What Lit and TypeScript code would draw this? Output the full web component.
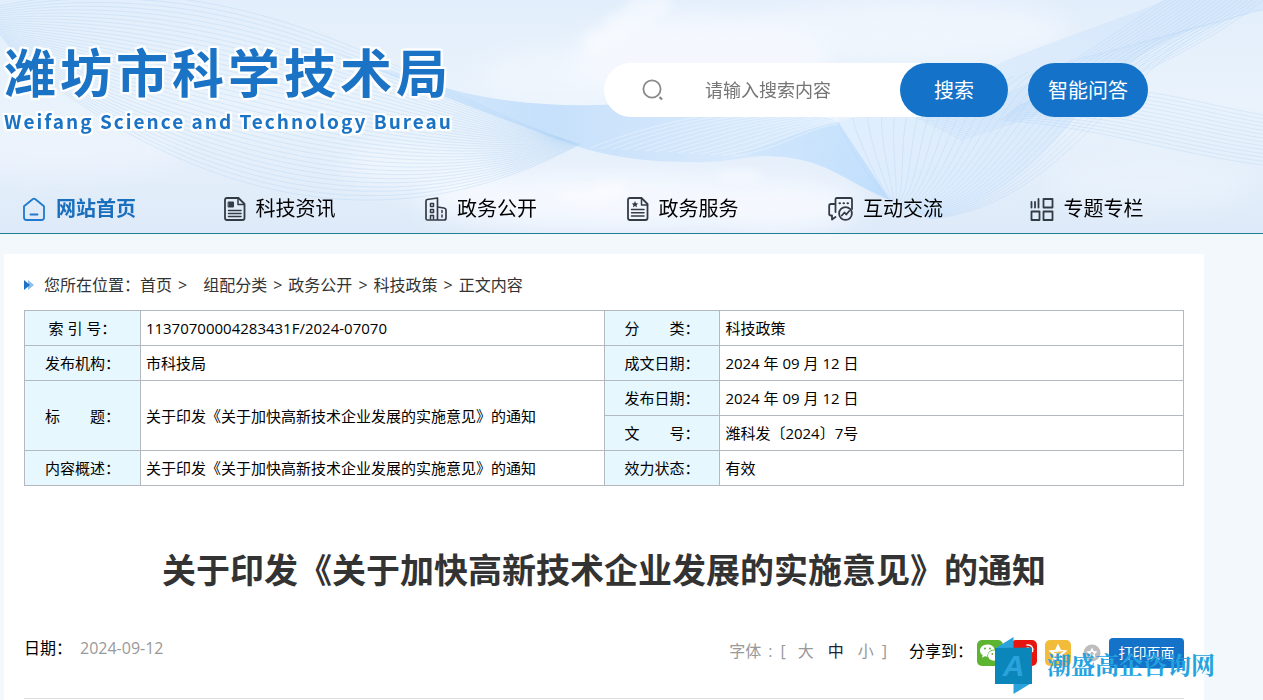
import { LitElement, html, svg, css } from "lit";
import { customElement, state } from "lit/decorators.js";

/** A family of evenly blended cubic curves between two outer curves. */
function ribbon(from: number[], to: number[], count: number): string {
  let d = "";
  for (let i = 0; i < count; i++) {
    const t = i / (count - 1);
    const p = from.map((v, k) => Math.round((v + (to[k] - v) * t) * 10) / 10);
    d += `M${p[0]} ${p[1]}C${p[2]} ${p[3]} ${p[4]} ${p[5]} ${p[6]} ${p[7]}`;
  }
  return d;
}

@customElement("sky-backdrop")
class SkyBackdrop extends LitElement {
  static styles = css`
    :host { display: block; overflow: hidden; }
    .art { display: block; width: 100%; height: 100%; }
  `;
  render() {
    const line = "#b3d4f5";
    return html`<svg class="art" viewBox="0 0 1263 233" preserveAspectRatio="none" aria-hidden="true">
      <defs>
        <linearGradient id="sky" x1="0" y1="0" x2="0" y2="1">
          <stop offset="0" stop-color="#e2eefb" /><stop offset="0.45" stop-color="#eaf3fc" /><stop offset="1" stop-color="#deeaf9" />
        </linearGradient>
        <linearGradient id="band" x1="300" y1="0" x2="900" y2="0" gradientUnits="userSpaceOnUse">
          <stop offset="0" stop-color="#cfe5fb" stop-opacity="0.5" /><stop offset="0.4" stop-color="#c6e0fb" /><stop offset="0.7" stop-color="#d6e8fb" /><stop offset="1" stop-color="#d3e8fd" stop-opacity="0.6" />
        </linearGradient>
        <linearGradient id="fold" x1="733" y1="150" x2="880" y2="190" gradientUnits="userSpaceOnUse">
          <stop offset="0" stop-color="#cbe3fc" stop-opacity="0.5" /><stop offset="1" stop-color="#c0defc" />
        </linearGradient>
        <linearGradient id="sweep" x1="840" y1="200" x2="1200" y2="0" gradientUnits="userSpaceOnUse">
          <stop offset="0" stop-color="#deedfd" /><stop offset="1" stop-color="#d2e5fa" />
        </linearGradient>
        <filter id="soft" x="-30%" y="-30%" width="160%" height="160%"><feGaussianBlur stdDeviation="12" /></filter>
        <filter id="puff" x="-30%" y="-30%" width="160%" height="160%"><feGaussianBlur stdDeviation="5" /></filter>
      </defs>
      <rect width="1263" height="233" fill="url(#sky)" />
      <g fill="#f4f8fe" filter="url(#soft)">
        <ellipse cx="700" cy="60" rx="130" ry="46" />
        <ellipse cx="900" cy="30" rx="170" ry="30" opacity="0.7" />
        <ellipse cx="560" cy="75" rx="80" ry="26" opacity="0.6" />
        <ellipse cx="60" cy="150" rx="120" ry="24" opacity="0.5" />
        <ellipse cx="420" cy="165" rx="80" ry="24" opacity="0.7" />
        <ellipse cx="610" cy="200" rx="190" ry="30" />
        <ellipse cx="770" cy="205" rx="90" ry="28" />
        <ellipse cx="1150" cy="185" rx="100" ry="26" opacity="0.35" />
      </g>
      <g fill="#fafcff" opacity="0.55" filter="url(#puff)">
        <circle cx="640" cy="14" r="17" /><circle cx="618" cy="28" r="15" /><circle cx="596" cy="42" r="13" /><circle cx="660" cy="5" r="12" />
        <ellipse cx="590" cy="196" rx="34" ry="9" /><ellipse cx="612" cy="188" rx="16" ry="8" /><ellipse cx="740" cy="176" rx="24" ry="7" />
      </g>
      <path d="M838 122C850 118 910 105 960 80C1050 40 1120 20 1165 0H1263V10C1190 20 1120 60 1080 110C1040 165 990 205 930 219C905 212 895 206 890 200Z" fill="url(#sweep)" opacity="0.75" />
      <path d="M300 35C350 60 400 75 446 88C500 103 560 108 620 104C720 98 820 110 838 122L890 200C850 184 830 162 785 157C750 153 730 164 690 162C650 162 610 158 570 144C480 110 380 75 300 35Z" fill="url(#band)" />
      <path d="M733 154C765 150 800 128 838 122L890 200C850 184 830 162 785 157Z" fill="url(#fold)" />
      <g fill="none" stroke=${line} stroke-width="0.7">
        <path opacity="0.55" d=${ribbon([-20, 10, 240, -50, 400, 80, 560, 138], [20, 60, 240, 235, 430, 225, 580, 144], 36)} />
        <path opacity="0.5" d=${ribbon([838, 122, 850, 150, 870, 180, 890, 200], [1263, 10, 1130, 30, 1080, 205, 930, 219], 30)} />
        <path opacity="0.5" d=${ribbon([900, 110, 1010, 120, 1100, 40, 1165, 0], [960, 140, 1060, 110, 1190, 60, 1263, 0], 20)} />
        <path opacity="0.5" d=${ribbon([1020, 105, 1100, 70, 1180, 100, 1263, 115], [1000, 120, 1090, 125, 1180, 155, 1263, 165], 14)} />
      </g>
      <g fill="none" stroke="#fff" stroke-width="0.7" opacity="0.5">
        <path d=${ribbon([590, 148, 660, 120, 740, 105, 838, 104], [733, 156, 780, 150, 800, 130, 838, 124], 14)} />
      </g>
    </svg>`;
  }
}

const navIcons = {
  home: { w: 24, art: svg`<path d="M2 9.2L10.6 2.2Q12 1.1 13.4 2.2L22 9.2V20.5Q22 23 19.500 23H4.500Q2 23 2 20.500Z" stroke-width="1.800"/><path d="M8.500 17.500H15.500" stroke-width="1.800"/>` },
  news: { w: 22, art: svg`<path d="M1 3Q1 1 3 1H14.500L20.500 7V21Q20.500 23 18.500 23H3Q1 23 1 21Z" stroke-width="1.800"/><path d="M14 1.500V7.500H20" stroke-width="1.500"/><path d="M4.500 5H9.500V10H4.500Z" fill="currentColor" stroke-width="1"/><path d="M4.500 13.500H17M4.500 16.500H17M4.500 19.500H17" stroke-width="1.500"/>` },
  building: { w: 22, art: svg`<path d="M1 4Q1 2.800 2.200 2.500L12.500 1V23H2.500Q1 23 1 21.500ZM12.500 10L19 11Q21 11.500 21 13V21Q21 23 19 23H12.500" stroke-width="1.700"/><path d="M5.500 6.500H8.500V9.500H5.500ZM5.500 12.500H8.500V15.500H5.500ZM5.500 22V18.500H8.500V22M17 13.500V15.500M17 18V20" stroke-width="1.500"/>` },
  service: { w: 22, art: svg`<path d="M1 3Q1 1 3 1H14.500L20.500 7V21Q20.500 23 18.500 23H3Q1 23 1 21Z" stroke-width="1.800"/><path d="M14.500 1.500V8H20.500" stroke-width="1.500"/><path d="M8 4L9 6.200L11.200 6.400L9.600 8L10 10.200L8 9L6 10.200L6.400 8L4.800 6.400L7 6.200Z" fill="currentColor" stroke="none"/><path d="M4.500 12.500H17M4.500 15.800H17M4.500 19H17" stroke-width="1.500"/>` },
  chat: { w: 25, art: svg`<path d="M7.500 15V2.500Q7.500 1 9 1H22.500Q24 1 24 2.500V12" stroke-width="1.800"/><path d="M7 7H3Q1.200 7 1.200 8.800V17Q1.200 18.500 3 18.500H4V22.500L7.500 20" stroke-width="1.800"/><path d="M11.500 6.200H12M15.500 6.200H16M19.500 6.200H20" stroke-width="2"/><circle cx="17.500" cy="16.500" r="6.400" stroke-width="1.800"/><path d="M13.800 18.500L16.500 15.500L18.300 17.500L21.200 14" stroke-width="1.800"/>` },
  grid: { w: 24, art: svg`<path d="M1.500 5V10.500M5 5V10.500M8.500 2V10.500" stroke-width="1.800"/><path d="M13.500 2H22.500V10.500H13.500ZM1.500 14.500H9.500V23H1.500ZM13.500 14.500H22.500V23H13.500Z" stroke-width="1.800"/>` },
};

const nav: { label: string; icon: keyof typeof navIcons; active?: boolean }[] = [
  { label: "网站首页", icon: "home", active: true },
  { label: "科技资讯", icon: "news" },
  { label: "政务公开", icon: "building" },
  { label: "政务服务", icon: "service" },
  { label: "互动交流", icon: "chat" },
  { label: "专题专栏", icon: "grid" },
];

@customElement("site-header")
class SiteHeader extends LitElement {
  static styles = css`
    :host { display: block; position: relative; border-bottom: 1px solid #1c7f94; background: #e6f0fb; }
    .backdrop { position: absolute; inset: 0; }
    .top {
      position: relative; display: flex; align-items: center; justify-content: space-between;
      max-width: 1144px; padding: 43px 0 0 4px;
    }
    .logo {
      color: #1a73c5; text-decoration: none; font-weight: 700; white-space: nowrap;
      font-family: "Noto Sans CJK SC", sans-serif;
      text-shadow: 2px 0 1px #fff, -2px 0 1px #fff, 0 2px 1px #fff, 0 -2px 1px #fff, 2px 2px 1px #fff, -2px -2px 1px #fff, 2px -2px 1px #fff, -2px 2px 1px #fff;
    }
    .name { display: block; font-size: 52px; line-height: 56px; letter-spacing: 4px; }
    .latin { display: block; margin-top: 6px; font-size: 19px; line-height: 32px; letter-spacing: 2px; }
    .tools { display: flex; gap: 20px; }
    .search { display: flex; align-items: center; width: 404px; height: 54px; border-radius: 27px; background: #fff; }
    .glass { flex: none; width: 22px; height: 22px; margin: 0 41px 0 38px; }
    .field {
      flex: 1; min-width: 0; height: 54px; padding: 0; border: 0; outline: 0; background: none;
      font: inherit; font-size: 18px; color: #333;
    }
    .field::placeholder { color: #757575; opacity: 1; }
    .btn {
      flex: none; height: 54px; padding: 0 0 2px; border: 0; border-radius: 27px; background: #1473c8; color: #fff;
      font: inherit; font-size: 20px; cursor: pointer;
    }
    .go { width: 108px; }
    .ask { width: 120px; }
    .nav {
      position: relative; display: grid; grid-template-columns: repeat(6, 1fr);
      height: 48px; margin-top: 48px; padding: 0 32px 0 22px;
    }
    .item { display: flex; align-items: center; gap: 10px; color: #000; text-decoration: none; font-size: 20px; line-height: 28px; white-space: nowrap; }
    .active { color: #1a6fbd; font-weight: 700; }
    .icon { flex: none; height: 24px; fill: none; stroke: currentColor; stroke-linejoin: round; stroke-linecap: round; color: #333b45; }
    .active .icon { color: #1f7acb; }
  `;
  render() {
    return html`
      <sky-backdrop class="backdrop"></sky-backdrop>
      <div class="top">
        <a class="logo" href="#"><span class="name">潍坊市科学技术局</span><span class="latin">Weifang Science and Technology Bureau</span></a>
        <div class="tools">
          <form class="search" role="search" @submit=${(e: Event) => e.preventDefault()}>
            <svg class="glass" viewBox="0 0 22 22" fill="none" stroke="#8a8a8a" stroke-width="1.800" aria-hidden="true">
              <circle cx="10" cy="10" r="8.600" /><path d="M17.500 18L20 20.500" stroke-width="2.400" />
            </svg>
            <input class="field" type="text" aria-label="请输入搜索内容" placeholder="请输入搜索内容" />
            <button class="btn go" type="submit">搜索</button>
          </form>
          <button class="btn ask" type="button">智能问答</button>
        </div>
      </div>
      <nav class="nav">
        ${nav.map((n) => html`<a class="item ${n.active ? "active" : ""}" href="#">
          <svg class="icon" width=${navIcons[n.icon].w} viewBox="0 0 ${navIcons[n.icon].w} 24" aria-hidden="true">${navIcons[n.icon].art}</svg>
          <span>${n.label}</span></a>`)}
      </nav>`;
  }
}

@customElement("article-info")
class ArticleInfo extends LitElement {
  static styles = css`
    :host { display: block; }
    .info { width: 100%; border-collapse: collapse; table-layout: fixed; font-size: 15px; line-height: 20px; color: #000; }
    .key { width: 10%; box-sizing: border-box; }
    .label, .value { height: 35px; box-sizing: border-box; padding: 0 5px; border: 1px solid #b4b8bf; }
    .label { background: #e6f7fe; font-weight: 400; text-align: center; white-space: pre; }
    .value { text-align: left; }
  `;
  render() {
    const subject = "关于印发《关于加快高新技术企业发展的实施意见》的通知";
    return html`<table class="info">
      <colgroup><col class="key" /><col /><col class="key" /><col /></colgroup>
      <tbody>
        <tr><th class="label" scope="row">索 引 号：</th><td class="value">11370700004283431F/2024-07070</td><th class="label" scope="row">分　　类：</th><td class="value">科技政策</td></tr>
        <tr><th class="label" scope="row">发布机构：</th><td class="value">市科技局</td><th class="label" scope="row">成文日期：</th><td class="value">2024 年 09 月 12 日</td></tr>
        <tr><th class="label" scope="row" rowspan="2">标　　题：</th><td class="value" rowspan="2">${subject}</td><th class="label" scope="row">发布日期：</th><td class="value">2024 年 09 月 12 日</td></tr>
        <tr><th class="label" scope="row">文　　号：</th><td class="value">潍科发〔2024〕7号</td></tr>
        <tr><th class="label" scope="row">内容概述：</th><td class="value">${subject}</td><th class="label" scope="row">效力状态：</th><td class="value">有效</td></tr>
      </tbody>
    </table>`;
  }
}

@customElement("article-meta")
class ArticleMeta extends LitElement {
  static styles = css`
    :host { display: flex; align-items: center; justify-content: space-between; position: relative; font-size: 16px; line-height: 20px; color: #000; }
    .date { display: flex; gap: 8px; padding-bottom: 10px; }
    .muted { color: #999; }
    .right { display: flex; align-items: center; }
    .sizes { display: flex; margin-right: 22px; padding-bottom: 4px; color: #999; }
    .colon { margin: 0 8px 0 7px; }
    .size { padding: 0; margin: 0 0 0 14px; border: 0; background: none; font: inherit; color: #999; cursor: pointer; }
    .first { margin-left: 12px; }
    .close { margin-left: 8px; }
    .on { color: #223; }
    .share { display: flex; align-items: center; margin-right: 4px; }
    .to { padding: 0 4px 4px 0; }
    .links { display: flex; gap: 8px; }
    .link { display: block; width: 26px; height: 26px; }
    .link svg { display: block; width: 26px; height: 26px; }
    .print { width: 75px; height: 30px; padding: 0; border: 0; border-radius: 4px; background: #1473c8; color: #fff; font: inherit; font-size: 14px; cursor: pointer; }
    .mark { position: absolute; right: -31px; top: -1px; display: flex; align-items: center; gap: 14px; height: 57px; pointer-events: none; white-space: nowrap; }
    .flag { display: block; width: 38px; height: 57px; }
    .words { padding-bottom: 4px; color: #25a3e0; font-family: "Noto Serif CJK SC", "Noto Sans CJK SC", serif; font-size: 24px; line-height: 28px; font-weight: 700; }
  `;
  @state() size = "中";
  render() {
    return html`
      <div class="date"><span>日期：</span><time class="muted">2024-09-12</time></div>
      <div class="right">
        <div class="sizes"><span>字体</span><span class="colon">:</span><span>[</span>
          ${["大", "中", "小"].map((s, i) => html`<button type="button" class="size ${i ? "" : "first"} ${s === this.size ? "on" : ""}" @click=${() => (this.size = s)}>${s}</button>`)}
          <span class="close">]</span>
        </div>
        <div class="share"><span class="to">分享到：</span>
          <div class="links">
          <a class="link" href="#" aria-label="微信"><svg viewBox="0 0 26 26"><rect width="26" height="26" rx="5" fill="#5db431" /><path d="M10.500 4.500C6 4.500 3 7.300 3 10.600C3 12.600 4 14.200 5.700 15.300L5 17.700L7.800 16.300L10.500 16.700C10 12.800 13 9.500 17.700 9.500C17 6.500 14 4.500 10.500 4.500Z" fill="#fff" /><path d="M17.300 10.500C13.500 10.500 11 12.800 11 15.600C11 18.500 13.600 20.800 17.200 20.800L19.500 20.400L21.700 21.700L21.200 19.700C22.600 18.700 23.500 17.300 23.500 15.600C23.500 12.800 20.800 10.500 17.300 10.500Z" fill="#fff" /><g fill="#5db431"><circle cx="8" cy="8.500" r="1" /><circle cx="13" cy="8.500" r="1" /><circle cx="15.300" cy="14" r="0.900" /><circle cx="19.300" cy="14" r="0.900" /></g></svg></a>
          <a class="link" href="#" aria-label="微博"><svg viewBox="0 0 26 26"><rect width="26" height="26" rx="5" fill="#e6160f" /><path d="M10 9C6 10.500 3.500 13.500 3.500 16C3.500 19 7 21 11 21C16 21 19.500 18.300 19.500 15.800C19.500 14 18 13.300 16.800 13C17.300 11.500 16 10 12.500 11.500C13 9.500 12 8.300 10 9Z" fill="#fff" /><ellipse cx="11" cy="16" rx="5" ry="3.500" fill="#e6160f" /><circle cx="10" cy="16.300" r="1.900" fill="#fff" /><path d="M16 5C20 4.300 22.500 7.500 21.500 11.500M16.300 8C18.300 7.700 19.200 9.200 18.700 10.800" fill="none" stroke="#fff" stroke-width="1.500" stroke-linecap="round" /></svg></a>
          <a class="link" href="#" aria-label="QQ空间"><svg viewBox="0 0 26 26"><rect width="26" height="26" rx="5" fill="#f2bb3a" /><path d="M13 3.500L15.800 9.700L22.500 10.400L17.500 15L19 21.700L13 18.200L7 21.700L8.500 15L3.500 10.400L10.200 9.700Z" fill="#fff" /><path d="M9 12.500L16.500 12L10.500 16.500H17" fill="none" stroke="#f2bb3a" stroke-width="1.200" /></svg></a>
          <a class="link" href="#" aria-label="收藏"><svg viewBox="0 0 26 26"><circle cx="13" cy="13" r="8.500" fill="#bdbdbd" /><path d="M13 7.500L14.700 11L18.500 11.500L15.700 14.200L16.400 18L13 16.200L9.600 18L10.300 14.200L7.500 11.500L11.300 11Z" fill="#fff" /><circle cx="13" cy="13.500" r="1.700" fill="#bdbdbd" /></svg></a>
          </div>
        </div>
        <button class="print" type="button">打印页面</button>
      </div>
      <div class="mark">
        <svg class="flag" viewBox="0 0 38 57" aria-hidden="true">
          <path d="M0 11.500L18.500 0V11.500Z" fill="#2aa3dd" /><path d="M18.500 46H36.500L18.500 57Z" fill="#2aa3dd" />
          <path d="M0 11L37 10.500V47H0Z" fill="#0a86bb" />
          <text x="18.500" y="39" text-anchor="middle" font-family="Liberation Sans, sans-serif" font-size="30" font-weight="700" font-style="italic" fill="#2aa3dd">A</text>
        </svg>
        <span class="words">潮盛高企咨询网</span>
      </div>`;
  }
}

@customElement("app-root")
class AppRoot extends LitElement {
  static styles = css`
    :host {
      display: flex; flex-direction: column; min-height: 100vh; overflow-x: hidden; background: #f3f8fd;
      font-family: "Open Sans", "Noto Sans CJK SC", sans-serif;
    }
    .card { flex: 1; box-sizing: border-box; width: calc(100% - 8px); max-width: 1200px; margin: 20px 4px 0; padding: 20px 20px 0; background: #fff; }
    .crumbs { display: flex; align-items: center; margin-bottom: 14px; font-size: 16px; line-height: 22px; color: #333; }
    .arrow { flex: none; width: 10px; height: 10px; margin-right: 10px; }
    .crumb { color: #333; text-decoration: none; }
    .sep { margin: 0 6px; }
    .wide { margin-right: 16px; }
    .title { margin: 60px 0 44px; font-size: 34px; line-height: 48px; font-weight: 700; text-align: center; color: #333; }
    .meta { padding-bottom: 30px; border-bottom: 1px solid #ddd; }
  `;
  render() {
    const crumbs = ["首页", "组配分类", "政务公开", "科技政策"];
    return html`
      <site-header></site-header>
      <main class="card">
        <nav class="crumbs">
          <svg class="arrow" viewBox="0 0 10 10" aria-hidden="true"><path d="M4 0L10 5L4 10Z" fill="#8fc0ea" /><path d="M0 0L6 5L0 10Z" fill="#1a73c5" /></svg>
          <span>您所在位置：</span>
          ${crumbs.map((c, i) => html`<a class="crumb" href="#">${c}</a><span class="sep ${i ? "" : "wide"}">&gt;</span>`)}
          <span>正文内容</span>
        </nav>
        <article-info></article-info>
        <h1 class="title">关于印发《关于加快高新技术企业发展的实施意见》的通知</h1>
        <article-meta class="meta"></article-meta>
      </main>`;
  }
}
